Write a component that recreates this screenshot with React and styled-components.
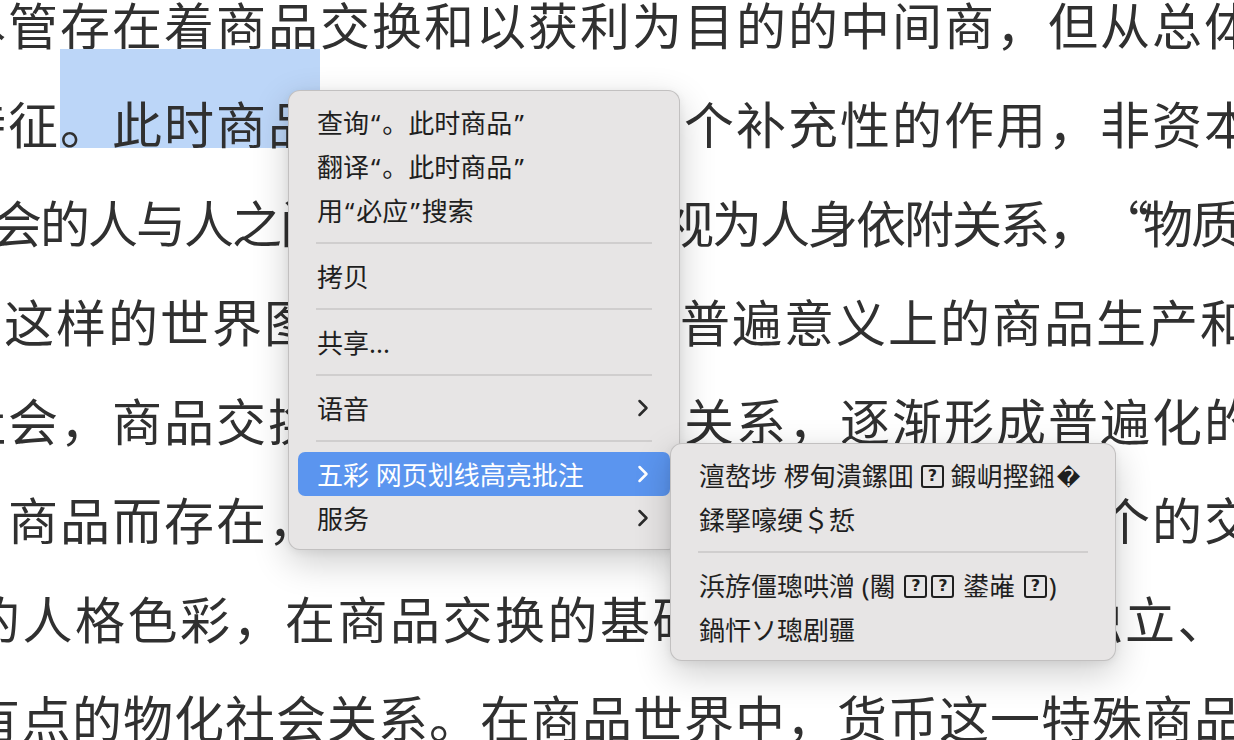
import React from 'react'
import styled, { createGlobalStyle } from 'styled-components'

const GlobalStyle = createGlobalStyle`
  html, body {
    margin: 0;
    padding: 0;
    background: #ffffff;
  }
`

const Page = styled.div`
  position: relative;
  width: 1234px;
  height: 740px;
  overflow: hidden;
  background: #ffffff;
`

const Article = styled.div`
  margin-top: -26px;
  font-family: "Noto Sans CJK SC", sans-serif;
  font-size: 50px;
  line-height: 99px;
  color: #303030;
`

const Line = styled.div`
  white-space: nowrap;
  margin-left: ${(p) => p.$x}px;
  letter-spacing: ${(p) => p.$ls}px;
`

// opening quote set full width, glyph pushed to the right of its box
const OpenQuote = styled.span`
  padding-left: ${(p) => p.$pad}px;
  margin-right: ${(p) => p.$pull}px;
`

// text selection, taller than the glyphs like the browser draws it
const Selected = styled.span`
  padding-top: 37px;
  background: linear-gradient(#bcd6f8, #bcd6f8) no-repeat left top / 100% 99px;
`

const Menu = styled.div`
  position: absolute;
  left: ${(p) => p.$x}px;
  top: ${(p) => p.$y}px;
  width: ${(p) => p.$w}px;
  box-sizing: border-box;
  padding: 9px;
  background: #e7e5e5;
  border: 1px solid rgba(0, 0, 0, 0.16);
  border-radius: 12px;
  box-shadow: 0 12px 36px rgba(0, 0, 0, 0.2), 0 2px 8px rgba(0, 0, 0, 0.06);
  font-family: "Noto Sans", "Noto Sans CJK SC", "DejaVu Sans", sans-serif;
  font-size: 26px;
  color: #1f1f1f;
  z-index: ${(p) => p.$z || 1};
`

const Item = styled.div`
  display: flex;
  align-items: center;
  justify-content: space-between;
  height: 44px;
  padding: 0 21px 0 19px;
  border-radius: 7px;
  white-space: nowrap;
  background: ${(p) => (p.$active ? '#5b95ef' : 'transparent')};
  color: ${(p) => (p.$active ? '#ffffff' : 'inherit')};
`

const Label = styled.span`
  white-space: nowrap;
`

const Q = styled.span`
  margin: 0 ${(p) => p.$m || 2}px;
`

const Separator = styled.div`
  height: 22px;
  display: flex;
  align-items: center;
  padding: 0 18px;

  &::after {
    content: "";
    flex: 1;
    height: 2px;
    background: #d0cece;
  }
`

const Tofu = styled.span`
  display: inline-flex;
  align-items: center;
  justify-content: center;
  width: 23px;
  height: 23px;
  box-sizing: border-box;
  margin: 0 ${(p) => p.$m ?? 4}px;
  border: 2px solid currentColor;
  border-radius: 3px;
  vertical-align: 5px;
  font-family: "DejaVu Sans", sans-serif;
  font-size: 16px;
  font-weight: 700;
  line-height: 1;
`

const Replacement = styled.span`
  font-family: "DejaVu Sans", sans-serif;
  font-size: 23px;
  margin-left: 2px;
`

const Chevron = ({ color }) => (
  <svg width="12" height="18" viewBox="0 0 12 18">
    <polyline
      points="2.5,2 9.5,9 2.5,16"
      fill="none"
      stroke={color}
      strokeWidth="2.5"
      strokeLinecap="round"
      strokeLinejoin="round"
    />
  </svg>
)

const App = () => {
  return (
    <Page>
      <GlobalStyle />
      <Article>
        <Line $x={-44} $ls={2}>尽管存在着商品交换和以获利为目的的中间商，但从总体</Line>
        <Line $x={-44} $ls={2}>
          特征<Selected>。此时商品</Selected>交换只是起着一个补充性的作用，非资本
        </Line>
        <Line $x={-8} $ls={-2}>
          会的人与人之间的社会关系常被视为人身依附关系，<OpenQuote $pad={28} $pull={-4}>“</OpenQuote>物质
        </Line>
        <Line $x={-48} $ls={2}>、这样的世界图景中不可能出现普遍意义上的商品生产和</Line>
        <Line $x={-44} $ls={2}>社会，商品交换成为人与人之间关系，逐渐形成普遍化的</Line>
        <Line $x={-44} $ls={2}>，商品而存在，劳动产品都转化为商品，并通过整个的交换</Line>
        <Line $x={-30} $ls={2.5}>的人格色彩，在商品交换的基础上，形成了人的独立、</Line>
        <Line $x={-30} $ls={1}>有点的物化社会关系。在商品世界中，货币这一特殊商品</Line>
      </Article>

      <Menu $x={288} $y={90} $w={392}>
        <Item>
          <Label>查询<Q>“</Q>。此时商品<Q>”</Q></Label>
        </Item>
        <Item>
          <Label>翻译<Q>“</Q>。此时商品<Q>”</Q></Label>
        </Item>
        <Item>
          <Label>用<Q>“</Q>必应<Q>”</Q>搜索</Label>
        </Item>
        <Separator />
        <Item>
          <Label>拷贝</Label>
        </Item>
        <Separator />
        <Item>
          <Label>共享...</Label>
        </Item>
        <Separator />
        <Item>
          <Label>语音</Label>
          <Chevron color="#2a2a2a" />
        </Item>
        <Separator />
        <Item $active>
          <Label>五彩 网页划线高亮批注</Label>
          <Chevron color="#ffffff" />
        </Item>
        <Item>
          <Label>服务</Label>
          <Chevron color="#2a2a2a" />
        </Item>
      </Menu>

      <Menu $x={670} $y={443} $w={446} $z={2}>
        <Item>
          <Label>
            澶嶅埗 椤甸潰鏍囬<Tofu $m={7}>?</Tofu>鍜岄摼鎺<Replacement>{'\uFFFD'}</Replacement>
          </Label>
        </Item>
        <Item>
          <Label>鍒掔嚎绠＄悊</Label>
        </Item>
        <Separator />
        <Item>
          <Label>
            浜斿僵璁哄潧 (闂 <Tofu $m={2}>?</Tofu><Tofu $m={2}>?</Tofu> 鍙嶉 <Tofu $m={2}>?</Tofu>)
          </Label>
        </Item>
        <Item>
          <Label>鍋忓ソ璁剧疆</Label>
        </Item>
      </Menu>
    </Page>
  )
}

export default App
